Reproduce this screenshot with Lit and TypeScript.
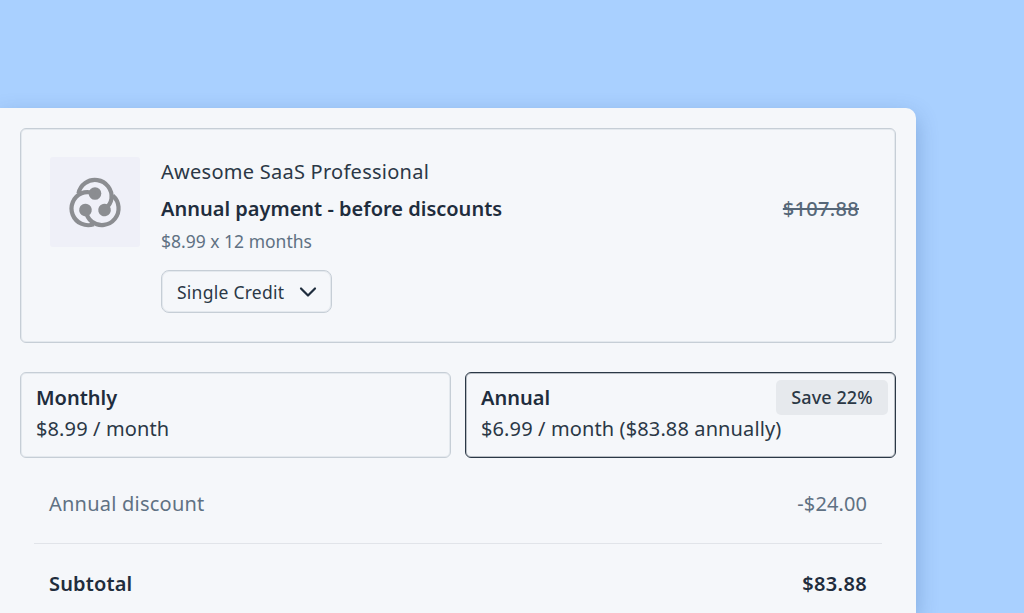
import { LitElement, html, svg, css } from "lit";
import { customElement } from "lit/decorators.js";

@customElement("app-root")
export class AppRoot extends LitElement {
  static styles = css`
    :host { display: block; width: 1024px; height: 613px; overflow: hidden; background: #a9d0ff; font-family: "Noto Sans", "Open Sans", sans-serif; color: #1f2d3d; }
    .wrap { height: 613px; overflow: hidden; padding-top: 108px; box-sizing: border-box; }
    .card { box-sizing: border-box; width: 916px; height: 505px; background: #f5f7fa; border-radius: 0 10px 0 0; padding: 20px; box-shadow: 0 8px 22px rgba(40, 80, 140, .32); }
    .product { box-sizing: border-box; height: 215px; border: 1px solid #c6ced6; box-shadow: inset 0 0 0 1px rgba(198, 206, 214, .35); border-radius: 6px; padding: 28px 36px 0 29px; display: flex; }
    .thumb { width: 90px; height: 90px; flex: none; background: #eff0f8; border-radius: 3px; display: flex; align-items: center; justify-content: center; }
    .info { margin-left: 21px; padding-top: 1px; flex: 1; display: flex; flex-direction: column; }
    .name { font-size: 20px; line-height: 28px; letter-spacing: .26px; color: #2b3846; }
    .pay { font-size: 20px; line-height: 28px; font-weight: 600; margin-top: 9px; letter-spacing: 0; }
    .per { font-size: 17.5px; line-height: 24px; color: #5f7183; margin-top: 6px; }
    .select { box-sizing: border-box; margin-top: 17px; width: 171px; height: 43px; border: 1px solid #c6ced6; box-shadow: inset 0 0 0 1px rgba(198, 206, 214, .35); border-radius: 8px; display: flex; align-items: center; justify-content: space-between; padding: 0 14px 0 15px; font-size: 17.5px; letter-spacing: .25px; color: #2b3846; }
    .price { font-size: 20px; font-weight: 500; letter-spacing: .3px; color: #566778; text-decoration: line-through; text-decoration-thickness: 2px; margin-top: 38px; line-height: 28px; }
    .plans { display: grid; grid-template-columns: 1fr 1fr; gap: 14px; margin-top: 29px; }
    .plan { box-sizing: border-box; position: relative; height: 86px; border: 1px solid #c6ced6; box-shadow: inset 0 0 0 1px rgba(198, 206, 214, .35); border-radius: 6px; padding: 10px 15px 0; }
    .plan.active { border-color: #2b3846; box-shadow: inset 0 0 0 1px rgba(43, 56, 70, .3); }
    .plan-title { font-size: 20px; font-weight: 600; line-height: 30px; letter-spacing: 0; }
    .plan-price { font-size: 20px; line-height: 31px; color: #2b3846; letter-spacing: .12px; }
    .badge { position: absolute; top: 6.5px; right: 7px; width: 112px; height: 35px; box-sizing: border-box; background: #e6e9ed; border-radius: 5px; display: flex; align-items: center; justify-content: center; font-size: 18px; letter-spacing: .1px; font-weight: 500; color: #2b3846; }
    .rows { margin: 0 14px; }
    .row { box-sizing: border-box; display: flex; justify-content: space-between; padding: 0 15px; font-size: 20px; align-items: center; }
    .row.discount { height: 86px; padding-top: 5px; color: #5f7183; border-bottom: 1px solid #e1e4e9; letter-spacing: .23px; }
    .row.total { height: 78px; font-weight: 600; letter-spacing: .15px; }
    .amount { letter-spacing: .35px; }
    .row.discount .amount { letter-spacing: .1px; }
    svg { display: block; }
  `;

  render() {
    const arm = "M-16.5 -11 A16.7 16.7 0 0 1 16.5 -6 C16 -2 13.5 2 9.5 5.5";
    return html`
      <div class="wrap"><div class="card">
        <div class="product">
          <div class="thumb">
            <svg width="54" height="54" viewBox="-27 -29.5 54 54" fill="none" stroke="#8b8d91" stroke-width="4.2">
              ${[0, 120, 240].map(
                (r) => svg`<g transform="rotate(${r})"><path d=${arm}></path><circle cx="0" cy="-11" r="6.3" fill="#8b8d91" stroke="none"></circle></g>`
              )}
            </svg>
          </div>
          <div class="info">
            <div class="name">Awesome SaaS Professional</div>
            <div class="pay">Annual payment - before discounts</div>
            <div class="per">$8.99 x 12 months</div>
            <div class="select">
              <span>Single Credit</span>
              <svg width="18" height="18" viewBox="0 0 18 18" fill="none" stroke="#1f2d3d" stroke-width="2.2" stroke-linecap="round" stroke-linejoin="round"><path d="M2 5.5 L9 12.5 L16 5.5"></path></svg>
            </div>
          </div>
          <div class="price">$107.88</div>
        </div>
        <div class="plans">
          <div class="plan">
            <div class="plan-title">Monthly</div>
            <div class="plan-price">$8.99 / month</div>
          </div>
          <div class="plan active">
            <div class="plan-title">Annual</div>
            <div class="plan-price">$6.99 / month ($83.88 annually)</div>
            <div class="badge">Save 22%</div>
          </div>
        </div>
        <div class="rows">
          <div class="row discount"><span>Annual discount</span><span class="amount">-$24.00</span></div>
          <div class="row total"><span>Subtotal</span><span class="amount">$83.88</span></div>
        </div>
      </div></div>
    `;
  }
}
